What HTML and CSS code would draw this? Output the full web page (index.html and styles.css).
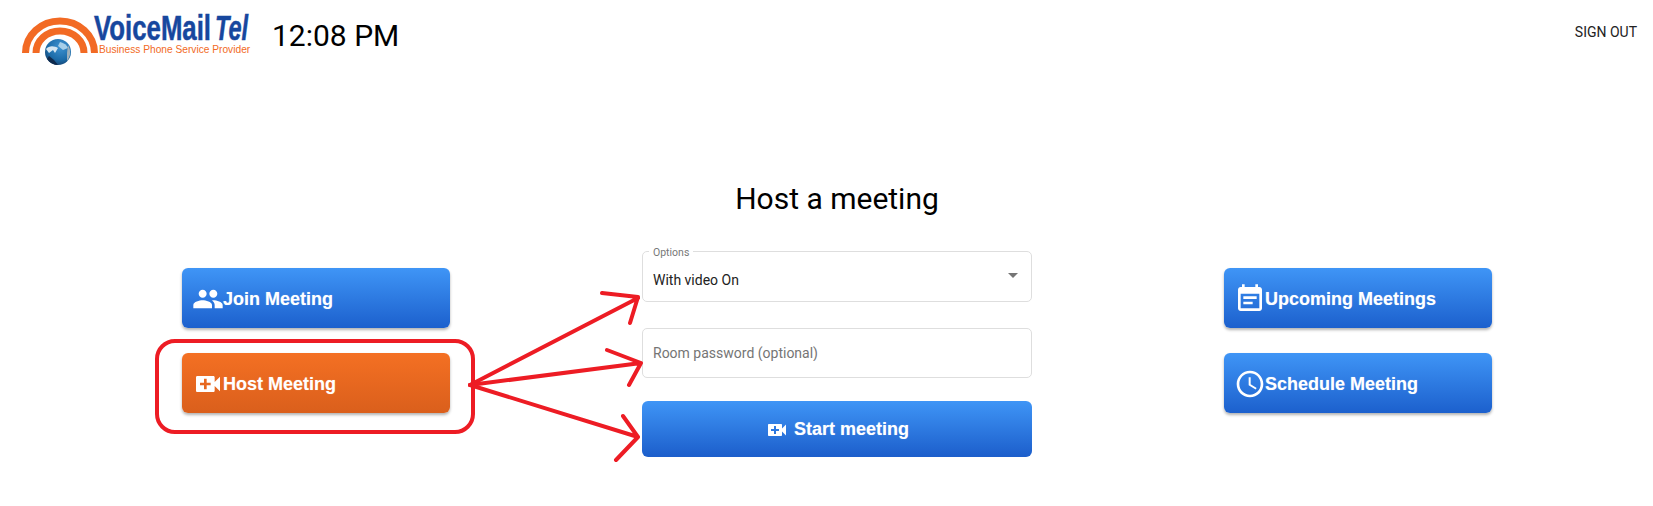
FILE: index.html
```html
<!DOCTYPE html>
<html lang="en">
<head>
  <meta charset="UTF-8">
  <title>VoiceMail Tel – Host a meeting</title>
  <link rel="stylesheet" href="styles.css">
</head>
<body>
  <header class="topbar">
    <svg class="logo" width="240" height="70" viewBox="0 0 240 70" role="img" aria-label="VoiceMail Tel">
      <defs>
        <radialGradient id="globeFill" cx="0.6" cy="0.3" r="0.85">
          <stop offset="0" stop-color="#3f93d2"/>
          <stop offset="0.6" stop-color="#1c6ba8"/>
          <stop offset="1" stop-color="#142f55"/>
        </radialGradient>
      </defs>
      <path class="arc" d="M8.5 53 A34.5 32 0 0 1 77.5 53"/>
      <path class="arc" d="M19 53 A24 22 0 0 1 67 53"/>
      <circle cx="41" cy="52" r="13" fill="url(#globeFill)"/>
      <path d="M29 49 C32 45 38 46 41 48 L38 53 L36 50 L32 53 Z" fill="#d5e6f2"/>
      <path d="M43 42 C47 43 50 45 51 48 L46 50 L41 46 Z" fill="#a6cfe9"/>
      <path d="M51 45 C54 50 54 56 50 61 L50 53 Z" fill="#9fb0ba"/>
      <path d="M30 59 C33 63 37 65 41 65 L37 60 L32 56 Z" fill="#0f2a4d"/>
      <text class="logo-name" transform="translate(77 40) scale(.737 1)">VoiceMail</text>
      <text class="logo-tel" transform="translate(198 40) scale(.672 1)">Tel</text>
      <text class="logo-tag" x="82" y="53">Business Phone Service Provider</text>
    </svg>
    <div class="clock">12:08 PM</div>
    <a class="signout" href="#">SIGN OUT</a>
  </header>

  <main class="meeting">
    <h1 class="meeting-title">Host a meeting</h1>
    <div class="meeting-columns">
      <div class="side-actions">
        <button class="action-btn">
          <svg class="icon" viewBox="0 0 24 24"><path d="M16 11c1.66 0 2.99-1.34 2.99-3S17.66 5 16 5c-1.66 0-3 1.34-3 3s1.34 3 3 3zm-8 0c1.66 0 2.99-1.34 2.99-3S9.66 5 8 5C6.34 5 5 6.34 5 8s1.34 3 3 3zm0 2c-2.33 0-7 1.17-7 3.5V19h14v-2.5c0-2.33-4.67-3.5-7-3.5zm8 0c-.29 0-.62.02-.97.05 1.16.84 1.97 1.97 1.97 3.45V19h6v-2.5c0-2.33-4.67-3.5-7-3.5z"/></svg>
          Join Meeting
        </button>
        <button class="action-btn active">
          <svg class="icon" viewBox="0 0 24 24"><path d="M17 10.5V7c0-.55-.45-1-1-1H4c-.55 0-1 .45-1 1v10c0 .55.45 1 1 1h12c.55 0 1-.45 1-1v-3.5l4 4v-11l-4 4zM14 13h-3v3H9v-3H6v-2h3V8h2v3h3v2z"/></svg>
          Host Meeting
        </button>
      </div>

      <form class="host-form">
        <fieldset class="field select-field">
          <legend>Options</legend>
          <div class="select-value">
            <span>With video On</span>
            <span class="caret"></span>
          </div>
        </fieldset>
        <input class="field password-field" type="text" placeholder="Room password (optional)">
        <button class="start-btn" type="button">
          <svg class="icon-small" viewBox="0 0 24 24"><path d="M17 10.5V7c0-.55-.45-1-1-1H4c-.55 0-1 .45-1 1v10c0 .55.45 1 1 1h12c.55 0 1-.45 1-1v-3.5l4 4v-11l-4 4zM14 13h-3v3H9v-3H6v-2h3V8h2v3h3v2z"/></svg>
          Start meeting
        </button>
      </form>

      <div class="side-actions">
        <button class="action-btn">
          <svg class="icon" viewBox="0 0 24 24"><path d="M17 10H7v2h10v-2zm2-7h-1V1h-2v2H8V1H6v2H5c-1.11 0-1.99.9-1.99 2L3 19c0 1.1.89 2 2 2h14c1.1 0 2-.9 2-2V5c0-1.1-.9-2-2-2zm0 16H5V8h14v11zm-5-5H7v2h7v-2z"/></svg>
          Upcoming Meetings
        </button>
        <button class="action-btn">
          <svg class="icon" viewBox="0 0 24 24"><path d="M11.99 2C6.47 2 2 6.48 2 12s4.47 10 9.99 10C17.52 22 22 17.52 22 12S17.52 2 11.99 2zM12 20c-4.42 0-8-3.58-8-8s3.58-8 8-8 8 3.58 8 8-3.58 8-8 8zm.5-13H11v6l5.25 3.15.75-1.23-4.5-2.67z"/></svg>
          Schedule Meeting
        </button>
      </div>
    </div>
  </main>

  <!-- red marker annotation drawn over the page -->
  <svg class="markup" width="1653" height="506" viewBox="0 0 1653 506">
    <rect x="157" y="341" width="316" height="91" rx="18"/>
    <path d="M470 385 L638 298 M602 293 L638 297 L630 323"/>
    <path d="M470 385 L641 363 M607 350 L641 363 L629 385"/>
    <path d="M470 385 L638 437 M623 416 L638 437 L616 460"/>
  </svg>
</body>
</html>
```

FILE: styles.css
```css
* {
  box-sizing: border-box;
}
body {
  margin: 0;
  height: 506px;
  overflow: hidden;
  background: #fff;
  color: #000;
  font-family: Roboto, Arial, sans-serif;
}
.topbar {
  display: flex;
  align-items: center;
  height: 70px;
  padding: 0 16px 0 17px;
}
.logo {
  flex: none;
}
.arc {
  fill: none;
  stroke: #f26a24;
  stroke-width: 7;
}
.logo-name,
.logo-tel {
  font: 700 35px "Liberation Sans", sans-serif;
  fill: #17479e;
  stroke: #17479e;
  stroke-width: 0.5;
}
.logo-tel {
  font-style: italic;
}
.logo-tag {
  font: 400 10.2px "Liberation Sans", sans-serif;
  fill: #f26a24;
}
.clock {
  margin-left: 15px;
  font-size: 30px;
}
.signout {
  margin-left: auto;
  margin-bottom: 7px;
  font-size: 14px;
  color: #222;
  text-decoration: none;
  text-transform: uppercase;
}
.meeting {
  padding: 111px 161px 0 182px;
}
.meeting-title {
  margin: 0 0 27px;
  text-align: center;
  font-size: 30px;
  font-weight: 400;
  line-height: 36px;
}
.meeting-columns {
  display: grid;
  grid-template-columns: 268px 1fr 268px;
}
.side-actions {
  display: flex;
  flex-direction: column;
  gap: 25px;
  padding-top: 24px;
}
.action-btn {
  display: flex;
  align-items: center;
  height: 60px;
  padding: 2px 10px 0;
  border: 0;
  border-radius: 6px;
  background: linear-gradient(#3f95f6, #1c60cd);
  box-shadow: 0 2px 3px rgba(0,0,0,0.3);
  color: #fff;
  font-family: "Liberation Sans", Arial, sans-serif;
  font-size: 18px;
  font-weight: 700;
  text-shadow: 0 0 1px rgba(255,255,255,0.4);
}
.action-btn.active {
  background: linear-gradient(#f47023, #da5f1c);
}
.icon {
  width: 32px;
  height: 32px;
  margin-right: -1px;
  fill: #fff;
  flex: none;
}
.host-form {
  display: flex;
  flex-direction: column;
  width: 390px;
  margin: 0 auto;
}
.field {
  width: 100%;
  height: 50px;
  margin: 0;
  border: 1px solid #dedede;
  border-radius: 5px;
  background: #fff;
}
.select-field {
  height: 58px;
  padding: 0 10px;
}
.select-field legend {
  padding: 4px 4px 0;
  margin-left: -4px;
  font-size: 10.5px;
  line-height: 1;
  color: #777;
}
.select-value {
  display: flex;
  align-items: center;
  justify-content: space-between;
  height: 42px;
  font-size: 14px;
  color: #222;
}
.caret {
  width: 0;
  height: 0;
  margin: 0 3px 8px 0;
  border-left: 5px solid transparent;
  border-right: 5px solid transparent;
  border-top: 5px solid #757575;
}
.password-field {
  margin-top: 26px;
  padding: 0 10px;
  font-family: Roboto, Arial, sans-serif;
  font-size: 14px;
}
.password-field::placeholder {
  color: #757575;
  opacity: 1;
}
.start-btn {
  display: flex;
  align-items: center;
  justify-content: center;
  gap: 5px;
  height: 56px;
  margin-top: 23px;
  padding-top: 2px;
  border: 0;
  border-radius: 6px;
  background: linear-gradient(#3f95f6, #1c5ecb);
  color: #fff;
  font-family: "Liberation Sans", Arial, sans-serif;
  font-size: 18px;
  font-weight: 700;
  text-shadow: 0 0 1px rgba(255,255,255,0.4);
}
.icon-small {
  width: 24px;
  height: 24px;
  fill: #fff;
}
.markup {
  position: absolute;
  left: 0;
  top: 0;
  pointer-events: none;
}
.markup rect,
.markup path {
  fill: none;
  stroke: #ed1c24;
  stroke-width: 4;
  stroke-linecap: round;
  stroke-linejoin: round;
}
```
